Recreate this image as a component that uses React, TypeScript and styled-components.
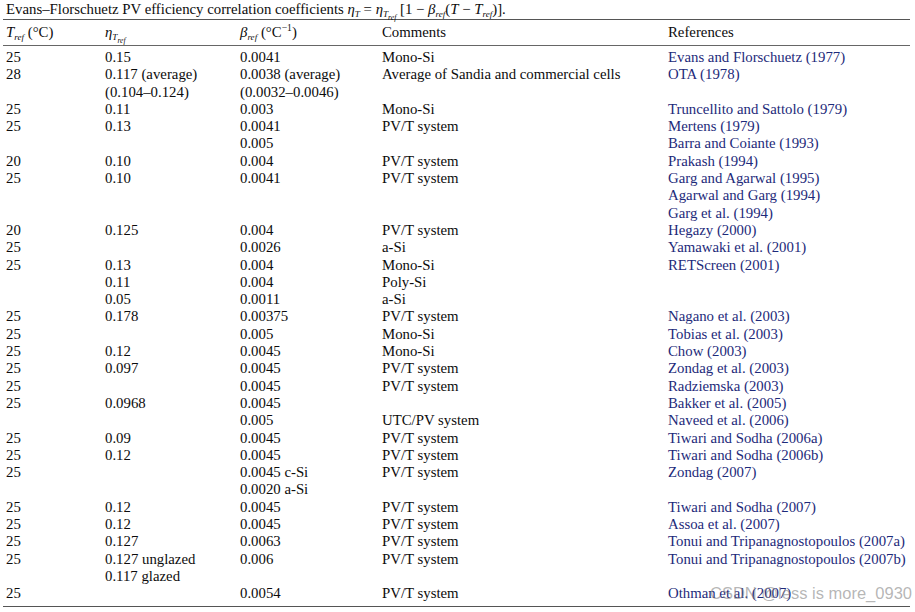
import React from 'react';
import styled, { createGlobalStyle } from 'styled-components';

const GlobalStyle = createGlobalStyle`
  html, body { margin: 0; padding: 0; background: #fff; }
  body { font-family: "Liberation Serif", "Times New Roman", serif; color: #0c0c0c; }
`;

const Page = styled.div`
  position: relative;
  width: 915px;
  height: 612px;
  padding: 0 5px 0 3px;
  box-sizing: border-box;
`;

const Caption = styled.div`
  font-size: 14.8px;
  line-height: 19px;
  padding-left: 3px;
  height: 19px;
  white-space: nowrap;
`;

const Table = styled.table`
  width: 907px;
  border-collapse: collapse;
  font-size: 14.8px;
  border-top: 1.5px solid #555;
  border-bottom: 1.5px solid #555;
`;

const HeadCell = styled.th`
  text-align: left;
  font-weight: normal;
  padding: 0 0 0 3px;
  height: 25px;
  border-bottom: 1.5px solid #666;
  white-space: nowrap;
  vertical-align: middle;
`;

const Cell = styled.td`
  padding: 0 0 0 3px;
  height: 17.29px;
  line-height: 17.29px;
  white-space: nowrap;
  vertical-align: middle;
`;

const FirstRow = styled.tr`
  td { padding-top: 3px; }
`;

const LastRow = styled.tr`
  td { padding-bottom: 3px; }
`;

const Ref = styled.span`
  color: #1d2a7a;
`;

const Sym = styled.i`
  font-style: italic;
`;

const Sub = styled.sub`
  font-size: 0.62em;
  font-style: italic;
  vertical-align: -0.35em;
  line-height: 0;
`;

const Sup = styled.sup`
  font-size: 0.65em;
  line-height: 0;
`;

const Watermark = styled.div`
  position: absolute;
  right: 3px;
  bottom: 9px;
  font-family: "Liberation Sans", Arial, sans-serif;
  font-size: 16.5px;
  color: rgba(120, 120, 120, 0.55);
  pointer-events: none;
  white-space: nowrap;
`;

type Row = [string, string, string, string, string];

const rows: Row[] = [
  ['25', '0.15', '0.0041', 'Mono-Si', 'Evans and Florschuetz (1977)'],
  ['28', '0.117 (average)', '0.0038 (average)', 'Average of Sandia and commercial cells', 'OTA (1978)'],
  ['', '(0.104–0.124)', '(0.0032–0.0046)', '', ''],
  ['25', '0.11', '0.003', 'Mono-Si', 'Truncellito and Sattolo (1979)'],
  ['25', '0.13', '0.0041', 'PV/T system', 'Mertens (1979)'],
  ['', '', '0.005', '', 'Barra and Coiante (1993)'],
  ['20', '0.10', '0.004', 'PV/T system', 'Prakash (1994)'],
  ['25', '0.10', '0.0041', 'PV/T system', 'Garg and Agarwal (1995)'],
  ['', '', '', '', 'Agarwal and Garg (1994)'],
  ['', '', '', '', 'Garg et al. (1994)'],
  ['20', '0.125', '0.004', 'PV/T system', 'Hegazy (2000)'],
  ['25', '', '0.0026', 'a-Si', 'Yamawaki et al. (2001)'],
  ['25', '0.13', '0.004', 'Mono-Si', 'RETScreen (2001)'],
  ['', '0.11', '0.004', 'Poly-Si', ''],
  ['', '0.05', '0.0011', 'a-Si', ''],
  ['25', '0.178', '0.00375', 'PV/T system', 'Nagano et al. (2003)'],
  ['25', '', '0.005', 'Mono-Si', 'Tobias et al. (2003)'],
  ['25', '0.12', '0.0045', 'Mono-Si', 'Chow (2003)'],
  ['25', '0.097', '0.0045', 'PV/T system', 'Zondag et al. (2003)'],
  ['25', '', '0.0045', 'PV/T system', 'Radziemska (2003)'],
  ['25', '0.0968', '0.0045', '', 'Bakker et al. (2005)'],
  ['', '', '0.005', 'UTC/PV system', 'Naveed et al. (2006)'],
  ['25', '0.09', '0.0045', 'PV/T system', 'Tiwari and Sodha (2006a)'],
  ['25', '0.12', '0.0045', 'PV/T system', 'Tiwari and Sodha (2006b)'],
  ['25', '', '0.0045 c-Si', 'PV/T system', 'Zondag (2007)'],
  ['', '', '0.0020 a-Si', '', ''],
  ['25', '0.12', '0.0045', 'PV/T system', 'Tiwari and Sodha (2007)'],
  ['25', '0.12', '0.0045', 'PV/T system', 'Assoa et al. (2007)'],
  ['25', '0.127', '0.0063', 'PV/T system', 'Tonui and Tripanagnostopoulos (2007a)'],
  ['25', '0.127 unglazed', '0.006', 'PV/T system', 'Tonui and Tripanagnostopoulos (2007b)'],
  ['', '0.117 glazed', '', '', ''],
  ['25', '', '0.0054', 'PV/T system', 'Othman et al. (2007)'],
];

const colWidths = [99, 135, 142, 286, 245];

const renderCells = (r: Row) => (
  <>
    <Cell>{r[0]}</Cell>
    <Cell>{r[1]}</Cell>
    <Cell>{r[2]}</Cell>
    <Cell>{r[3]}</Cell>
    <Cell><Ref>{r[4]}</Ref></Cell>
  </>
);

export default function App() {
  return (
    <Page>
      <GlobalStyle />
      <Caption>
        Evans–Florschuetz PV efficiency correlation coefficients{' '}
        <Sym>η</Sym><Sub>T</Sub> = <Sym>η</Sym><Sub>T<sub>ref</sub></Sub>{' '}
        [1 − <Sym>β</Sym><Sub>ref</Sub>(<Sym>T</Sym> − <Sym>T</Sym><Sub>ref</Sub>)].
      </Caption>
      <Table>
        <colgroup>
          {colWidths.map((w, i) => <col key={i} style={{ width: w }} />)}
        </colgroup>
        <thead>
          <tr>
            <HeadCell><Sym>T</Sym><Sub>ref</Sub> (°C)</HeadCell>
            <HeadCell><Sym>η</Sym><Sub>T<sub>ref</sub></Sub></HeadCell>
            <HeadCell><Sym>β</Sym><Sub>ref</Sub> (°C<Sup>−1</Sup>)</HeadCell>
            <HeadCell>Comments</HeadCell>
            <HeadCell>References</HeadCell>
          </tr>
        </thead>
        <tbody>
          {rows.map((r, i) => {
            if (i === 0) return <FirstRow key={i}>{renderCells(r)}</FirstRow>;
            if (i === rows.length - 1) return <LastRow key={i}>{renderCells(r)}</LastRow>;
            return <tr key={i}>{renderCells(r)}</tr>;
          })}
        </tbody>
      </Table>
      <Watermark>CSDN @less is more_0930</Watermark>
    </Page>
  );
}
